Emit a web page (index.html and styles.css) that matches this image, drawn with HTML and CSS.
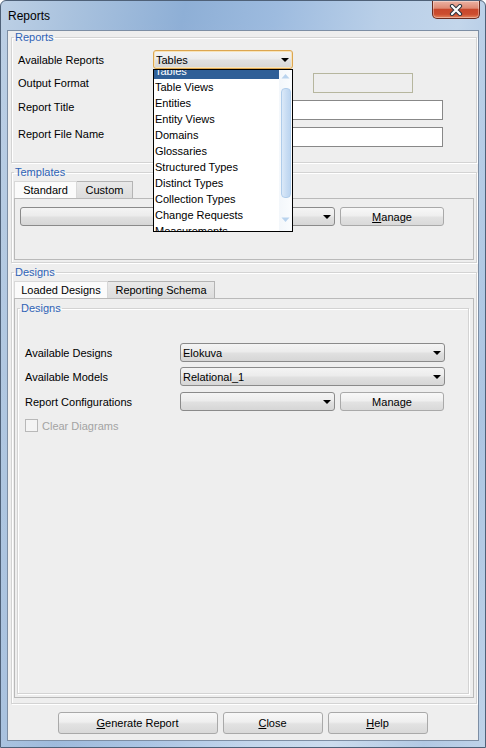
FILE: index.html
```html
<!DOCTYPE html>
<html>
<head>
<meta charset="utf-8">
<link rel="stylesheet" href="styles.css">
</head>
<body>
<div class="window">
  <div class="titlebar">
    <span class="title">Reports</span>
    <div class="close">
      <svg width="14" height="12" viewBox="0 0 14 12">
        <path d="M3 2 L11 10 M11 2 L3 10" stroke="#2e3640" stroke-width="4.2" stroke-linecap="round" fill="none"/>
        <path d="M3 2 L11 10 M11 2 L3 10" stroke="#ffffff" stroke-width="2.2" stroke-linecap="round" fill="none"/>
      </svg>
    </div>
  </div>
  <div class="client">
    <fieldset class="group">
      <legend>Reports</legend>
      <div class="reports-body">
        <div class="row r1">
          <span class="lbl lbl-rep">Available Reports</span>
          <div class="combo focused w-rep"><span class="val">Tables</span><i class="arrow"></i></div>
        </div>
        <div class="row r2">
          <span class="lbl lbl-rep">Output Format</span>
          <div class="field disabled"></div>
        </div>
        <div class="row r3">
          <span class="lbl lbl-rep">Report Title</span>
          <div class="field w-text"></div>
        </div>
        <div class="row r3">
          <span class="lbl lbl-rep">Report File Name</span>
          <div class="field w-text"></div>
        </div>
      </div>
    </fieldset>

    <fieldset class="group gap-top">
      <legend>Templates</legend>
      <div class="tabs-body">
        <div class="tabs">
          <div class="tab selected t-std">Standard</div>
          <div class="tab t-cus">Custom</div>
        </div>
        <div class="panel tpl-panel">
          <div class="row">
            <div class="combo w-tpl"><span class="val"></span><i class="arrow"></i></div>
            <div class="btn w-manage"><span><u>M</u>anage</span></div>
          </div>
        </div>
      </div>
    </fieldset>

    <fieldset class="group gap-top">
      <legend>Designs</legend>
      <div class="tabs-body designs-body">
        <div class="tabs">
          <div class="tab selected t-ld">Loaded Designs</div>
          <div class="tab t-rs">Reporting Schema</div>
        </div>
        <div class="panel des-panel">
          <fieldset class="group inner">
            <legend>Designs</legend>
            <div class="inner-body">
              <div class="row">
                <span class="lbl lbl-des">Available Designs</span>
                <div class="combo w-des"><span class="val">Elokuva</span><i class="arrow"></i></div>
              </div>
              <div class="row gap5">
                <span class="lbl lbl-des">Available Models</span>
                <div class="combo w-des"><span class="val">Relational_1</span><i class="arrow"></i></div>
              </div>
              <div class="row gap6">
                <span class="lbl lbl-des">Report Configurations</span>
                <div class="combo w-cfg"><span class="val"></span><i class="arrow"></i></div>
                <div class="btn w-manage"><span>Manage</span></div>
              </div>
              <div class="row check-row">
                <span class="checkbox"></span>
                <span class="disabled-text">Clear Diagrams</span>
              </div>
            </div>
          </fieldset>
        </div>
      </div>
    </fieldset>

    <div class="buttons">
      <div class="btn big w-gen"><span><u>G</u>enerate Report</span></div>
      <div class="btn big w-std"><span><u>C</u>lose</span></div>
      <div class="btn big w-std"><span><u>H</u>elp</span></div>
    </div>
  </div>

  <div class="popup">
    <div class="list">
      <ul>
        <li class="hl">Tables</li>
        <li>Table Views</li>
        <li>Entities</li>
        <li>Entity Views</li>
        <li>Domains</li>
        <li>Glossaries</li>
        <li>Structured Types</li>
        <li>Distinct Types</li>
        <li>Collection Types</li>
        <li>Change Requests</li>
        <li>Measurements</li>
      </ul>
    </div>
    <div class="sbar">
      <svg class="sarrow" width="9" height="6" viewBox="0 0 9 6"><path d="M0.5 5.5 L4.5 1 L8.5 5.5 Z" fill="#b9d3ee"/></svg>
      <div class="thumb"></div>
      <svg class="sarrow down" width="9" height="6" viewBox="0 0 9 6"><path d="M0.5 0.5 L4.5 5 L8.5 0.5 Z" fill="#b9d3ee"/></svg>
    </div>
  </div>
</div>
</body>
</html>
```

FILE: styles.css
```css
html, body {
  margin: 0;
  padding: 0;
}
body {
  font-family: "Liberation Sans", Arial, sans-serif;
  font-size: 11px;
  color: #000;
  background: #ffffff;
}
.window {
  position: relative;
  width: 486px;
  height: 748px;
  box-sizing: border-box;
  border: 1px solid #4f6178;
  border-radius: 6px 6px 0 0;
  overflow: hidden;
  background:
    linear-gradient(180deg, rgba(255,255,255,0) 0%, rgba(255,255,255,0.15) 100%),
    linear-gradient(100deg, #bdd0e5 0%, #a9c2de 12%, #8eafd6 30%, #9dbbdf 45%, #b9cfe8 62%, #c3d6eb 75%, #a5c0df 90%, #b4cbe5 100%);
}
.titlebar {
  height: 29px;
  display: flex;
  justify-content: space-between;
  align-items: flex-start;
}
.title {
  font-size: 12px;
  line-height: 12px;
  margin: 9px 0 0 7px;
  color: #000;
}
.close {
  width: 48px;
  height: 18px;
  box-sizing: border-box;
  margin-right: 5px;
  border: 1px solid #6a2b1f;
  border-top: 0;
  border-radius: 0 0 5px 5px;
  background: linear-gradient(180deg, #ebb2a3 0%, #de8a75 42%, #c8472c 50%, #cc4d2e 78%, #e58660 100%);
  display: flex;
  align-items: center;
  justify-content: center;
  box-shadow: inset 0 0 0 1px rgba(255,255,255,0.35);
}
.client {
  margin: 0 6px 6px 6px;
  height: 711px;
  box-sizing: border-box;
  border: 1px solid #7d8ea4;
  background: #eeeeee;
  padding: 0 1px 0 3px;
}
fieldset.group {
  margin: 0;
  padding: 0;
  min-width: 0;
  border: 1px solid #d3d3d3;
  box-shadow: 1px 1px 0 #ffffff, inset 1px 1px 0 #ffffff;
}
fieldset.group legend {
  padding: 0 1px;
  margin-left: 2px;
  line-height: 12px;
  font-size: 11px;
  color: #2f63b6;
}
.gap-top {
  margin-top: 3px !important;
}
.reports-body {
  padding: 7px 0 15px 6px;
}
.row {
  display: flex;
  align-items: center;
}
.r2 { margin-top: 4px; }
.r3 {
  margin-top: 7px;
  align-items: flex-start;
}
.r3 .lbl {
  line-height: 14px;
}
.lbl {
  flex: none;
}
.lbl-rep { width: 135px; }
.lbl-des { width: 155px; }
.combo {
  box-sizing: border-box;
  height: 19px;
  border: 1px solid #8a8a8a;
  border-radius: 3px;
  background: linear-gradient(180deg, #f4f4f4 0%, #ececec 45%, #e0e0e0 55%, #d6d6d6 100%);
  display: flex;
  align-items: center;
  padding: 0 3px 0 2px;
  flex: none;
}
.combo.focused {
  border-color: #dca650;
  box-shadow: inset 0 0 0 1px #f8e3b8;
}
.combo .val {
  flex: 1;
  line-height: 14px;
}
.arrow {
  width: 0;
  height: 0;
  border-left: 4px solid transparent;
  border-right: 4px solid transparent;
  border-top: 4px solid #000;
  margin-top: 1px;
}
.w-rep { width: 140px; }
.w-text { width: 290px; }
.w-tpl { width: 315px; }
.w-des { width: 265px; }
.w-cfg { width: 155px; }
.field {
  box-sizing: border-box;
  height: 20px;
  border: 1px solid #888888;
  background: #ffffff;
  flex: none;
}
.field.disabled {
  width: 100px;
  margin-left: 160px;
  border-color: #b6b69e;
  background: transparent;
}
.btn {
  box-sizing: border-box;
  height: 19px;
  border: 1px solid #a9a9a9;
  border-radius: 3px;
  background: linear-gradient(180deg, #f8f8f8 0%, #efefef 45%, #e2e2e2 55%, #d9d9d9 100%);
  display: flex;
  align-items: center;
  justify-content: center;
  flex: none;
  margin-left: 5px;
}
.w-manage { width: 104px; }
.tabs-body {
  padding: 3px 2px 2px 2px;
}
.designs-body {
  padding-bottom: 5px;
}
.tabs {
  display: flex;
  height: 17px;
}
.tab {
  box-sizing: border-box;
  height: 17px;
  border: 1px solid #b4b4b4;
  border-bottom: 0;
  background: linear-gradient(180deg, #e9e9e9 0%, #dcdcdc 100%);
  display: flex;
  align-items: center;
  justify-content: center;
  line-height: 14px;
}
.tab.selected {
  background: #fbfbfb;
  border-color: #d8d8d8;
}
.tab + .tab {
  border-left: 0;
}
.t-std { width: 63px; }
.t-cus { width: 56px; }
.t-ld { width: 94px; }
.t-rs { width: 107px; }
.panel {
  box-sizing: border-box;
  border: 1px solid #b9b9b9;
}
.tpl-panel {
  height: 62px;
  padding: 8px 0 0 5px;
}
.des-panel {
  height: 400px;
  padding: 3px 4px 3px 2px;
}
.inner-body {
  box-sizing: border-box;
  height: 379px;
  padding: 29px 0 0 7px;
}
.gap5 { margin-top: 5px; }
.gap6 { margin-top: 6px; }
.check-row {
  margin-top: 6px;
  height: 17px;
}
.checkbox {
  box-sizing: border-box;
  width: 13px;
  height: 13px;
  border: 1px solid #b8b8b8;
  background: #f4f4f4;
  margin-right: 4px;
}
.disabled-text {
  color: #a3a3a3;
  margin-top: 1px;
}
.buttons {
  display: flex;
  justify-content: center;
  gap: 5px;
  margin: 8px 0 0 -3px;
}
.btn.big {
  height: 22px;
  margin: 0;
}
.w-gen { width: 160px; }
.w-std { width: 100px; }
.popup {
  position: absolute;
  left: 152px;
  top: 68px;
  width: 140px;
  height: 163px;
  box-sizing: border-box;
  border: 1px solid #000;
  background: #ffffff;
  display: flex;
  overflow: hidden;
}
.list {
  flex: 1;
  overflow: hidden;
}
.list ul {
  list-style: none;
  margin: -7px 0 0 0;
  padding: 0;
}
.list li {
  height: 16px;
  line-height: 16px;
  padding-left: 1px;
  white-space: nowrap;
}
.list li.hl {
  background: #2f5f97;
  color: #ffffff;
}
.sbar {
  width: 13px;
  flex: none;
  background: linear-gradient(90deg, #f3f7fb, #fafcfe);
  display: flex;
  flex-direction: column;
  align-items: center;
}
.sarrow {
  margin-top: 3px;
}
.thumb {
  margin-top: 9px;
  width: 10px;
  height: 110px;
  box-sizing: border-box;
  border: 1px solid #b0cdeb;
  border-radius: 4px;
  background: linear-gradient(90deg, #dbe9f8, #c7dcf3 60%, #bcd5f0);
}
.sarrow.down {
  margin-top: 19px;
}
```
